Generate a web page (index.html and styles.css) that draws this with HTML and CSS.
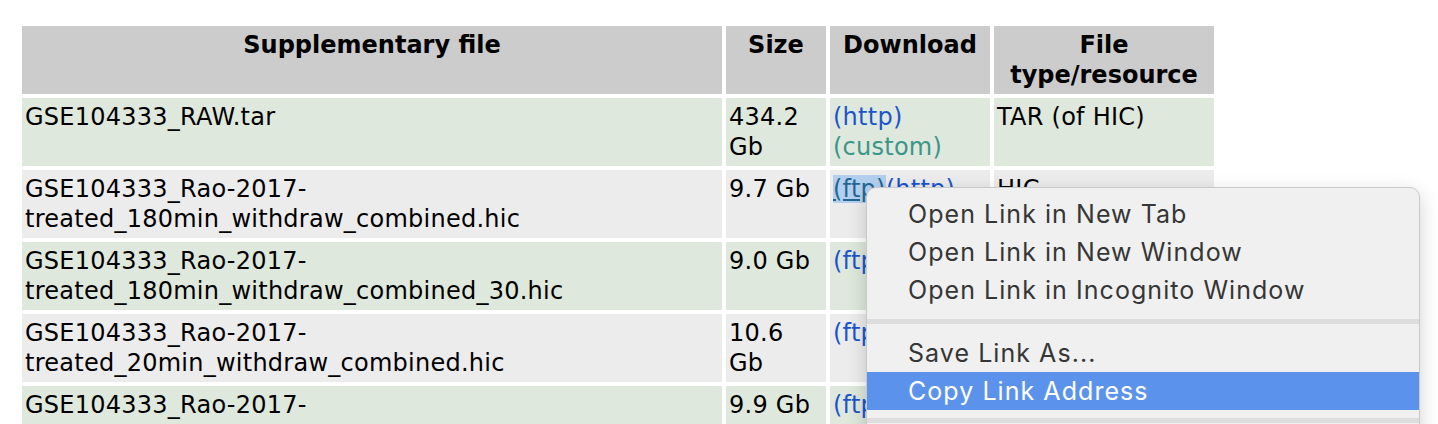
FILE: index.html
```html
<!DOCTYPE html>
<html>
<head>
<meta charset="utf-8">
<link rel="stylesheet" href="styles.css">
</head>
<body>
<table class="supp">
  <colgroup>
    <col class="c-file"><col class="c-size"><col class="c-dl"><col class="c-type">
  </colgroup>
  <thead>
    <tr>
      <th>Supplementary file</th>
      <th>Size</th>
      <th>Download</th>
      <th>File type/resource</th>
    </tr>
  </thead>
  <tbody>
    <tr class="even">
      <td>GSE104333_RAW.tar</td>
      <td>434.2 Gb</td>
      <td><a class="lnk">(http)</a> <a class="lnk custom">(custom)</a></td>
      <td>TAR (of HIC)</td>
    </tr>
    <tr class="odd">
      <td>GSE104333_Rao-2017-treated_180min_withdraw_combined.hic</td>
      <td>9.7 Gb</td>
      <td><a class="lnk hovered"><span class="sel">(ftp)</span></a><a class="lnk">(http)</a></td>
      <td>HIC</td>
    </tr>
    <tr class="even">
      <td>GSE104333_Rao-2017-treated_180min_withdraw_combined_30.hic</td>
      <td>9.0 Gb</td>
      <td><a class="lnk">(ftp)</a><a class="lnk">(http)</a></td>
      <td>HIC</td>
    </tr>
    <tr class="odd">
      <td>GSE104333_Rao-2017-treated_20min_withdraw_combined.hic</td>
      <td>10.6 Gb</td>
      <td><a class="lnk">(ftp)</a><a class="lnk">(http)</a></td>
      <td>HIC</td>
    </tr>
    <tr class="even">
      <td>GSE104333_Rao-2017-treated_20min_withdraw_combined_30.hic</td>
      <td>9.9 Gb</td>
      <td><a class="lnk">(ftp)</a><a class="lnk">(http)</a></td>
      <td>HIC</td>
    </tr>
  </tbody>
</table>

<div class="menu">
  <div class="item">Open Link in New Tab</div>
  <div class="item">Open Link in New Window</div>
  <div class="item">Open Link in Incognito Window</div>
  <div class="sep"></div>
  <div class="item">Save Link As...</div>
  <div class="item active">Copy Link Address</div>
  <div class="sep last"></div>
</div>
</body>
</html>
```

FILE: styles.css
```css
html, body {
  margin: 0;
  padding: 0;
  background: #ffffff;
  overflow: hidden;
}
body {
  padding: 22px 0 0 18px;
  height: 424px;
  box-sizing: border-box;
  font-family: "DejaVu Sans", Verdana, sans-serif;
  font-size: 24px;
  line-height: 30px;
  color: #000;
}
.supp {
  border-collapse: separate;
  border-spacing: 4px;
  table-layout: fixed;
  width: 1200px;
}
.c-file { width: 700px; }
.c-size { width: 100px; }
.c-dl { width: 160px; }
.c-type { width: 220px; }
.supp th, .supp td {
  padding: 4px 3px;
  vertical-align: top;
  text-align: left;
  height: 60px;
}
.supp td { letter-spacing: 0.25px; }
.supp th {
  background: #cccccc;
  font-weight: bold;
  text-align: center;
}
.supp tr.even td { background: #dfe8dc; }
.supp tr.odd td { background: #ececec; }
.lnk {
  color: #1a55cc;
  text-decoration: none;
}
.lnk.custom { color: #3a9688; }
.lnk.hovered {
  color: #23668f;
  text-decoration: underline;
}
.sel { background: #b3cff0; }

.menu {
  position: absolute;
  left: 866px;
  top: 187px;
  width: 552px;
  height: 250px;
  background: #f0f0f0;
  border: 1px solid #c9c9c9;
  border-radius: 10px;
  box-shadow: 0 6px 20px rgba(0, 0, 0, 0.18);
  padding-top: 7px;
  font-family: Inter, "Noto Sans", sans-serif;
  font-size: 25px;
  letter-spacing: 1.05px;
  color: #363636;
  overflow: hidden;
}
.item {
  height: 38px;
  line-height: 38px;
  padding-left: 41px;
}
.item.active {
  background: #5b93ec;
  color: #ffffff;
}
.sep {
  height: 5px;
  margin: 10px 0;
  background: #dddddd;
}
.sep.last { margin-top: 8px; }
```
